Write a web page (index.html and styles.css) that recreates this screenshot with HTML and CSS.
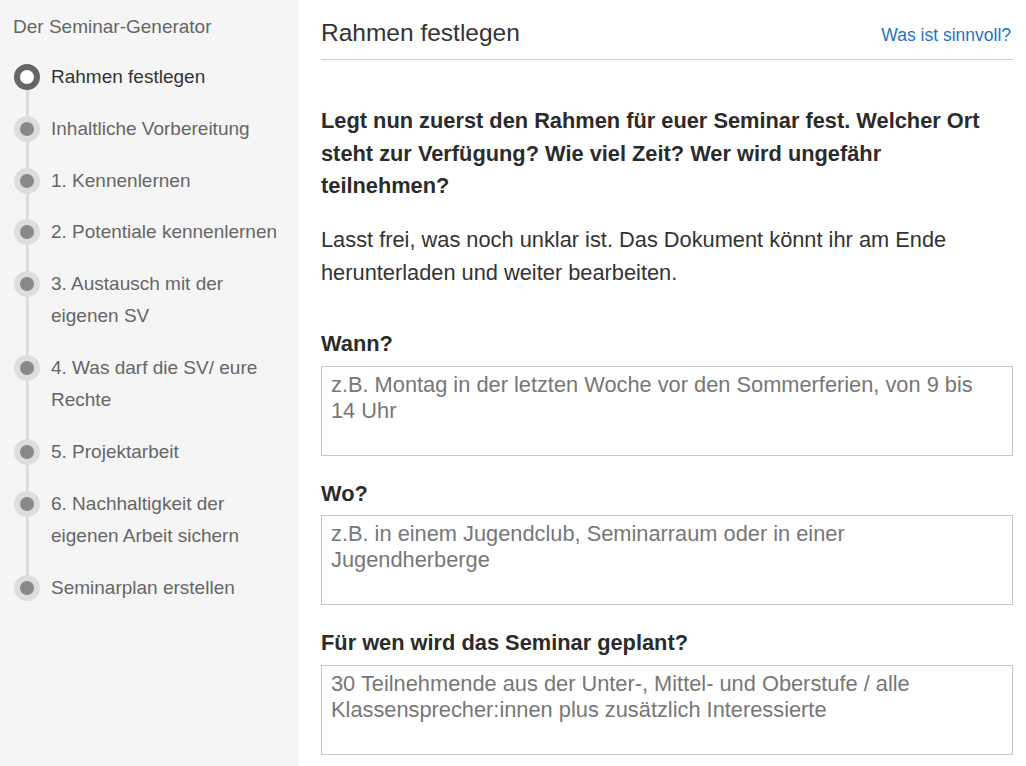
FILE: index.html
```html
<!DOCTYPE html>
<html lang="de">
<head>
<meta charset="utf-8">
<title>Der Seminar-Generator</title>
<link rel="stylesheet" href="styles.css">
</head>
<body>
<div class="layout">
  <aside class="sidebar">
    <div class="sidebar-title">Der Seminar-Generator</div>
    <ul class="steps">
      <li class="step active"><span class="dot"></span><span class="step-text">Rahmen festlegen</span></li>
      <li class="step"><span class="dot"></span><span class="step-text">Inhaltliche Vorbereitung</span></li>
      <li class="step"><span class="dot"></span><span class="step-text">1. Kennenlernen</span></li>
      <li class="step"><span class="dot"></span><span class="step-text">2. Potentiale kennenlernen</span></li>
      <li class="step"><span class="dot"></span><span class="step-text">3. Austausch mit der eigenen SV</span></li>
      <li class="step"><span class="dot"></span><span class="step-text">4. Was darf die SV/ eure Rechte</span></li>
      <li class="step"><span class="dot"></span><span class="step-text">5. Projektarbeit</span></li>
      <li class="step"><span class="dot"></span><span class="step-text">6. Nachhaltigkeit der eigenen Arbeit sichern</span></li>
      <li class="step"><span class="dot"></span><span class="step-text">Seminarplan erstellen</span></li>
    </ul>
  </aside>
  <main class="main">
    <header class="main-header">
      <h1 class="title">Rahmen festlegen</h1>
      <a class="help-link" href="#">Was ist sinnvoll?</a>
    </header>
    <p class="intro">Legt nun zuerst den Rahmen für euer Seminar fest. Welcher Ort steht zur Verfügung? Wie viel Zeit? Wer wird ungefähr teilnehmen?</p>
    <p class="note">Lasst frei, was noch unklar ist. Das Dokument könnt ihr am Ende herunterladen und weiter bearbeiten.</p>
    <div class="field">
      <label class="field-label" for="wann">Wann?</label>
      <textarea id="wann" class="field-input" placeholder="z.B. Montag in der letzten Woche vor den Sommerferien, von 9 bis 14 Uhr"></textarea>
    </div>
    <div class="field">
      <label class="field-label" for="wo">Wo?</label>
      <textarea id="wo" class="field-input" placeholder="z.B. in einem Jugendclub, Seminarraum oder in einer Jugendherberge"></textarea>
    </div>
    <div class="field">
      <label class="field-label" for="wer">Für wen wird das Seminar geplant?</label>
      <textarea id="wer" class="field-input" placeholder="30 Teilnehmende aus der Unter-, Mittel- und Oberstufe / alle Klassensprecher:innen plus zusätzlich Interessierte"></textarea>
    </div>
  </main>
</div>
</body>
</html>
```

FILE: styles.css
```css
html, body {
  margin: 0;
  padding: 0;
  background: #ffffff;
}
body {
  font-family: "Liberation Sans", Arial, sans-serif;
  color: #333333;
  overflow: hidden;
}
.layout {
  display: flex;
  min-height: 766px;
}
.sidebar {
  width: 299px;
  flex: 0 0 299px;
  background: #f5f5f5;
  padding: 13px 10px 0 14px;
  box-sizing: border-box;
}
.sidebar-title {
  font-size: 19px;
  line-height: 28px;
  color: #666666;
  margin-left: -1px;
}
.steps {
  list-style: none;
  margin: 20px 0 0 0;
  padding: 0;
  position: relative;
  display: flex;
  flex-direction: column;
  gap: 19.6px;
}
.steps::before {
  content: "";
  position: absolute;
  left: 12px;
  width: 3px;
  top: 16px;
  bottom: 16px;
  background: #dddddd;
}
.step {
  display: flex;
  align-items: flex-start;
  gap: 11px;
  font-size: 19px;
  line-height: 32.2px;
  color: #666666;
  position: relative;
}
.dot {
  flex: 0 0 26px;
  width: 26px;
  height: 26px;
  margin-top: 3px;
  box-sizing: border-box;
  border-radius: 50%;
  border: 6px solid #dddddd;
  background: #888888;
}
.step.active {
  color: #333333;
}
.step.active .dot {
  border-color: #666666;
  background: #ffffff;
}
.main {
  flex: 1;
  padding: 0 13px 0 22px;
  min-width: 0;
}
.main-header {
  display: flex;
  justify-content: space-between;
  align-items: baseline;
  padding-top: 18px;
  height: 60px;
  box-sizing: border-box;
  border-bottom: 1px solid #d0d0d0;
}
.title {
  margin: 0;
  font-size: 24.5px;
  line-height: 29px;
  font-weight: normal;
  color: #333333;
}
.help-link {
  font-size: 17.5px;
  color: #1f73c4;
  text-decoration: none;
  padding-right: 2px;
}
.intro {
  margin: 45px 0 0 0;
  font-size: 21.8px;
  line-height: 32.7px;
  font-weight: bold;
  color: #2b2b2b;
}
.note {
  margin: 21px 0 0 0;
  font-size: 21.8px;
  line-height: 32.7px;
  color: #333333;
}
.field {
  display: flex;
  flex-direction: column;
  margin-top: 38.5px;
}
.field + .field {
  margin-top: 22px;
}
.field-label {
  font-size: 21.8px;
  line-height: 32.7px;
  font-weight: bold;
  color: #2b2b2b;
  margin-bottom: 5px;
}
.field-input {
  display: block;
  width: 100%;
  height: 90px;
  box-sizing: border-box;
  border: 1px solid #c6c6c6;
  border-radius: 0;
  padding: 5px 14px 5px 9px;
  font-family: "Liberation Sans", Arial, sans-serif;
  font-size: 21.8px;
  line-height: normal;
  color: #333333;
  resize: none;
  background: #ffffff;
  outline: none;
}
.field-input::placeholder {
  color: #777777;
  opacity: 1;
}
```
